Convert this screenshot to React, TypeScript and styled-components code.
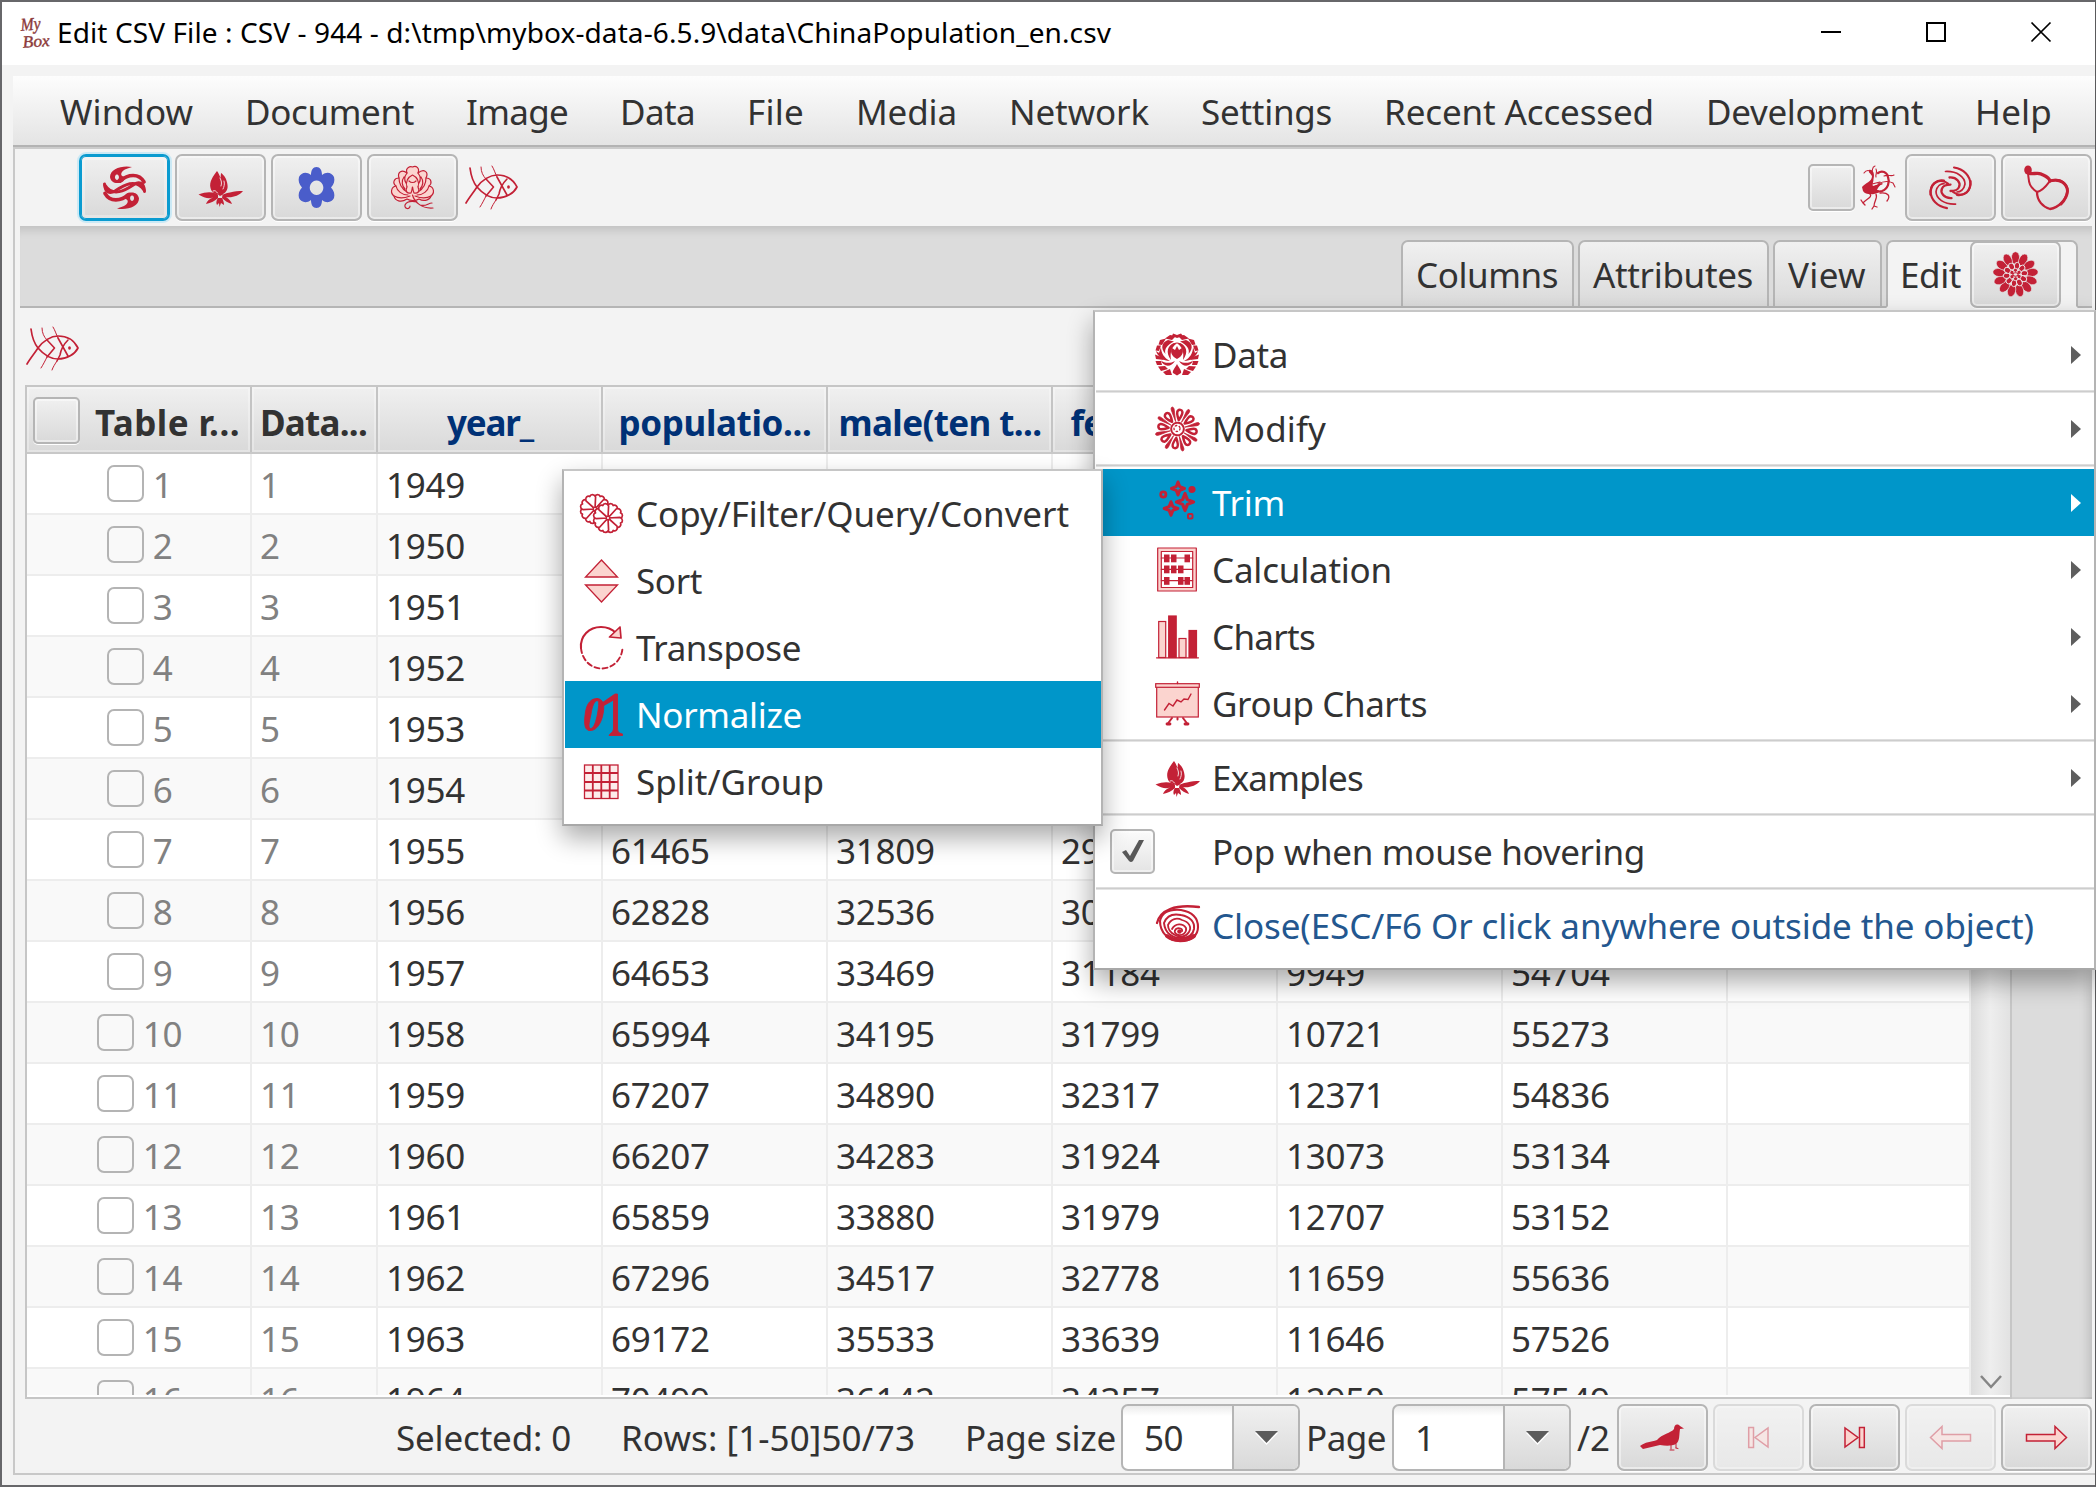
import React, { useLayoutEffect, useRef, useState } from 'react';
import styled, { createGlobalStyle, css } from 'styled-components';

const RED = '#c32136';
const PINK = '#fbd4cf';
const ACCENT = '#0096c9';

const GlobalStyle = createGlobalStyle`
  *, *::before, *::after { box-sizing: border-box; }
  html, body { margin: 0; padding: 0; overflow: hidden; }
  body {
    font-family: 'Noto Sans', 'Open Sans', 'Liberation Sans', sans-serif;
    font-size: 35px;
    line-height: 48px;
    color: #323232;
  }
`;

/* ---------- text that is tracked to an exact advance width ---------- */

const FittedSpan = styled.span<{ $w: number }>`
  display: block;
  flex: none;
  width: ${(p) => p.$w}px;
  padding-left: 1px;
  white-space: pre;
`;
const FittedInner = styled.span`
  display: inline-block;
`;

function Label({ text, w }: { text: string; w: number }) {
  const ref = useRef<HTMLSpanElement>(null);
  const [tracking, setTracking] = useState(0);
  useLayoutEffect(() => {
    const el = ref.current;
    if (!el) return;
    el.style.letterSpacing = '0px';
    const natural = el.getBoundingClientRect().width;
    const next = (w - 2 - natural) / text.length;
    el.style.letterSpacing = `${next}px`;
    setTracking(next);
  }, [text, w]);
  return (
    <FittedSpan $w={w}>
      <FittedInner ref={ref} style={{ letterSpacing: `${tracking}px` }}>{text}</FittedInner>
    </FittedSpan>
  );
}

/* ---------- icons ---------- */

const Svg = styled.svg`
  display: block;
  flex: none;
  overflow: visible;
`;

function Icon({ w = 45, h = 45, children }: { w?: number; h?: number; children: React.ReactNode }) {
  return (
    <Svg width={w} height={h} viewBox={`0 0 ${w} ${h}`} fill="none" stroke={RED} strokeWidth={1.6} strokeLinecap="round" strokeLinejoin="round">
      {children}
    </Svg>
  );
}

const ring = (n: number, offset = 0) => Array.from({ length: n }, (_, i) => offset + (360 / n) * i);

const DragonHalf = () => (
  <g>
    <path fill={RED} stroke="none" fillRule="evenodd" d="M30 2C20 0 8 4 8 12C9 18 15 19.500 21 16.500L25 12C20 12 18 10 20 7C22 4 26 3.500 30 2ZM15 9.500a2 2.700 0 1 1 -.1 0Z" />
    <path d="M18 16C26 9 37 8 42 17" strokeWidth={3.700} />
    <path d="M2.500 19C3 28 8 29 13 26C22 20 34 13 42 25" strokeWidth={3} />
  </g>
);
const TaijiIcon = () => (
  <Icon>
    <DragonHalf />
    <g transform="rotate(180 22.5 22.7)"><DragonHalf /></g>
  </Icon>
);

const LotusIcon = () => (
  <Icon>
    <g fill={RED} stroke="none">
      <path d="M19 6C15 11 11 17 12.500 23C13 26 15 28 18 29L25 29C29 27 30 23 29.500 20C29 14 26 10 23 8L22.500 13C21.500 10 20.500 8 19 6Z" />
      <path d="M20 27H25L24 33H20ZM22 31C17 27 10 26 0.500 29.500C6 33 11 34 15 32.500C11 34 9 36 8 39C13 38 17 36 20 33C18 36 18 38 19 40L21 38L21.500 42L23 38L26 40C26 37 25 35 24 33C27 36 30 38 34 39C33 36 31 34 28 32C34 33 41 31 45 26C36 26 27 28 22 31Z" />
    </g>
    <path d="M22 13C23.500 16 24 18 23 21M26 16C27 19 26 22 25 24M15 26C17 25 18 26 19.500 28" stroke="#f3d9dc" strokeWidth={1} />
  </Icon>
);

const GearFlowerIcon = () => (
  <Icon>
    <g fill="#4a5dca" stroke="none">
      <path fillRule="evenodd" d="M22.500 2C26 2 28 5 28 10C33 6 38 8 40 12C41 16 40 19 37 22.500C40 26 41 29 40 33C38 37 33 39 28 35C28 40 26 43 22.500 43C19 43 17 40 17 35C12 39 7 37 5 33C4 29 5 26 8 22.500C5 19 4 16 5 12C7 8 12 6 17 10C17 5 19 2 22.500 2ZM22.500 15.500a6.800 7.200 0 1 0 .1 0Z" />
    </g>
  </Icon>
);

const PeonyIcon = () => (
  <Icon>
    <g fill={PINK} strokeWidth={1.2}>
      <path d="M17 8C15 3 20 1 22.500 2C26 0 30 3 28 8C34 3 39 7 36 13C42 13 42 19 39 21C44 22 45 28 41 31C40 35 34 37 29 34C26 36 20 36 17 34C11 38 5 36 4 31C0 28 1 22 6 21C2 18 4 13 9 13C7 7 12 4 17 8Z" />
      <path d="M22.500 10C18 12 15 17 17 22C19 25 26 25 28 22C30 17 27 12 22.500 10Z" />
      <path d="M9 13C9 19 12 24 17 27M36 13C36 19 33 24 28 27M6 21C7 26 12 30 18 30M39 21C38 26 33 30 27 30M17 8C14 12 14 15 16 18M28 8C31 12 31 15 29 18M4 31C9 34 15 33 20 31M41 31C36 34 30 33 25 31M14 12C11 16 12 21 15 24M31 12C34 16 33 21 30 24" />
      <path d="M17 22C15 26 17 29 21 28C22 26 22 24 22.500 22C23 24 23 26 24 28C28 29 30 26 28 22M19 16C21 18 24 18 26 16" />
      <path fill="none" d="M22.500 30C24 36 31 44 43 43M27 37C22 36 17 36 15 40C14 44 20 45 20 41M30 40C36 42 38 38 42 38" />
    </g>
  </Icon>
);

const FishIcon = () => (
  <Icon w={53} h={45}>
    <path d="M5 3C6 11 8 17 12 22C18 29 24 33 32 33C41 33 49 28 52 22C48 14 41 10 32 10C25 10 17 15 12 22C8 28 4 33 1 38" strokeWidth={1.7} />
    <path d="M21 14L28.500 22L21 31M42 14C38 18 35 23 34 29L31 35M32 12L42 30" strokeWidth={1.6} />
    <path d="M16 2C16 7 18 11 21 14M27 1C29 4 30 8 32 12M21 31C19 35 17 39 15 42M31 35C29 38 27 41 26 44" strokeWidth={1} />
    <ellipse cx={43.500} cy={22} rx={1.400} ry={1.800} fill={RED} stroke="none" />
  </Icon>
);

const PhoenixIcon = () => (
  <Icon w={37} h={45}>
    <path fill={RED} stroke="none" d="M2 22C5 18 12 17 12 11C10 8 8 7 9 5C13 4 15 9 13.500 14C13.500 18 11 21 14 21C17 20 20 18 23 18C20 20 18 22 17 25C20 25 20 27 17 28C13 30 5 30 3 26Z" />
    <path d="M4 8C6 5 9 5 12 7M12 7C13 3 12 2 15 1M16 4C18 8 15 9 16 12M24 11C28 9 31 12 34 10M18 19C25 15 31 17 33 18L35 22M12 19L20 17M12 22L22 19" strokeWidth={1.1} />
    <path d="M18 8C22 5 27 7 28 12C30 17 28 24 22 26L16 27" strokeWidth={2.200} />
    <path d="M20 28C28 27 31 31 27 36M16 29C18 33 14 36 14 41L12 44M14 41L17 42M10 29C13 32 6 34 3 38L1 35M3 38L5 40" strokeWidth={1.3} />
  </Icon>
);

const WaveHalf = () => (
  <g>
    <path d="M26 2.500C36 4 42 11 42.500 19C42 28 33 33 25 27" strokeWidth={2.100} />
    <path d="M42.500 16C43 27 36 31 29 30" strokeWidth={2.200} />
    <path d="M17.500 6.500C29 6 37 12 37 19C36 25 32 27 29 27" strokeWidth={1.700} />
    <path d="M21.500 12.500C29 12 33 18 31 22C30 25 27 26 22.500 26" strokeWidth={2.300} />
  </g>
);
const WaveIcon = () => (
  <Icon>
    <WaveHalf />
    <g transform="rotate(180 22.5 22.8)"><WaveHalf /></g>
  </Icon>
);

const GourdIcon = () => (
  <Icon>
    <ellipse cx={4} cy={5} rx={3.800} ry={4.500} fill={RED} stroke="none" />
    <path d="M5 8C8 10 13 7 17 9C21 11 25 12 26 16" strokeWidth={3.400} />
    <path d="M4 8C5 16 4 21 13 27C19 26 23 20 26 16" strokeWidth={2} />
    <path d="M26 16C34 13 41 16 43.500 24C44 34 34 43 26 44C19 42 13 36 13 27" strokeWidth={2.300} />
    <path d="M28 15.500C36 14 43 18 43.500 26C43 32 40 36 37 39" strokeWidth={3} />
  </Icon>
);

const DahliaIcon = () => (
  <Icon>
    <g fill={RED} stroke="none">
      {ring(13).map((a) => <ellipse key={`o${a}`} cx={22.500} cy={6} rx={4.100} ry={6.300} transform={`rotate(${a} 22.5 22.5)`} stroke="#e8e8e8" strokeWidth={0.600} />)}
      {ring(10, 10).map((a) => <ellipse key={`m${a}`} cx={22.500} cy={13.600} rx={2.700} ry={3.400} transform={`rotate(${a} 22.5 22.5)`} stroke="#ececec" strokeWidth={0.900} />)}
      {ring(6).map((a) => <ellipse key={`i${a}`} cx={22.500} cy={18.300} rx={2.200} ry={2} transform={`rotate(${a} 22.5 22.5)`} stroke="#ececec" strokeWidth={0.800} />)}
    </g>
    <ellipse cx={22.500} cy={22.500} rx={2.600} ry={1.700} fill="#ececec" strokeWidth={1.100} />
  </Icon>
);

const BlossomSide = () => (
  <g fill={RED} stroke="none">
    <path d="M19 10C13 12 10 19 16 27C15 20 16 15 21 11Z" />
    <path d="M13 7L19 8.500C12 12 9 16 10.500 21C5 15 7 9 13 7Z" />
    <path d="M6 14C6 20 9 25 15 28C8 28 3 24 1 18L4 20Z" />
    <path d="M20 28C15 31 9 30 6 27.500C8 33.500 16 35 20 28Z" />
    <path d="M15 2L21 3L17 7L10 5.500ZM5 7L11 5.500L7 12L3.500 11.500ZM2 12.500L6 12.500L4 18L0.500 17.500ZM0 21.500L6 24L9 27L1 26ZM0.500 28L6 28L7 32L2 32ZM3 33.500L10 33L13 36L6 38ZM8 39L15 36L17 42L11 42Z" />
  </g>
);
const BlossomIcon = () => (
  <Icon>
    <g transform="translate(0 1)">
      <BlossomSide />
      <g transform="translate(44 0) scale(-1 1)"><BlossomSide /></g>
      <g fill={RED} stroke="none">
        <path d="M18 0.500L22 2L26 0.500L28 3L22 5L17 3Z" />
        <path d="M22 26C16 23 15 18 17 15L20 17L22 13L24 17L27 15C29 18 28 23 22 26Z" />
        <path d="M22 31C20 35 17 38 18 40L22 42.500L26 40C27 38 24 35 22 31Z" />
        <path d="M17 12C19 8.500 25 8.500 27 12L22 10.500Z" />
      </g>
    </g>
  </Icon>
);

const DaisyIcon = () => (
  <Icon>
    {ring(16, 8).map((a, i) => (
      <g key={a} transform={`rotate(${a} 22.5 23)`}>
        {i % 2 ? (
          <path d="M22.500 15L21.200 3C21.200 -0.500 24.400 -0.500 24.200 3Z" fill={RED} strokeWidth={0.700} />
        ) : (
          <path d="M22.500 14C20.500 10 19 7 20.200 5C21.500 3.200 24 3.200 24.800 5C26 7 24.500 10 22.500 14Z" fill="#fff" strokeWidth={2.500} />
        )}
      </g>
    ))}
    <circle cx={22.500} cy={23} r={6.300} fill="#fff" strokeWidth={2} strokeDasharray="3 1.200" />
    <circle cx={22} cy={22.500} r={3} strokeWidth={1.300} strokeDasharray="1.500 2.500" />
  </Icon>
);

const star = (cx: number, cy: number, r: number) => {
  const k = r * 0.28;
  return `M${cx} ${cy - r}L${cx + k} ${cy - k}L${cx + r} ${cy}L${cx + k} ${cy + k}L${cx} ${cy + r}L${cx - k} ${cy + k}L${cx - r} ${cy}L${cx - k} ${cy - k}Z`;
};
const SparkleIcon = () => (
  <Icon>
    <g strokeLinejoin="round">
      <path d={star(23, 8.500, 6.500)} strokeWidth={3} />
      <path d={star(30, 22, 8.500)} strokeWidth={3.200} />
      <path d={star(16, 28.500, 6.800)} strokeWidth={3} />
    </g>
    <circle cx={8.300} cy={14.500} r={2.600} strokeWidth={2.800} />
    <circle cx={37} cy={9.500} r={2.400} strokeWidth={2.400} fill={RED} />
    <rect x={33} y={34} width={4.500} height={4.500} rx={1} strokeWidth={2} />
  </Icon>
);

const AbacusIcon = () => (
  <Icon>
    <path fillRule="evenodd" fill={PINK} strokeWidth={1.200} d="M2.700 1H41.300V44H2.700ZM6.300 4.500V40.500H37.700V4.500Z" />
    <path d="M6.300 11H37.700M6.300 22.300H37.700M6.300 33.600H37.700" strokeWidth={1.200} />
    <g fill={RED} stroke="none">
      {[[9, 7.500], [16, 7.500], [29.500, 7.500], [9, 18.500], [16, 18.500], [23, 18.500], [9, 30], [23, 30], [29.500, 30]].map(([x, y]) => (
        <rect key={`${x}-${y}`} x={x} y={y} width={5.500} height={7.800} />
      ))}
    </g>
  </Icon>
);

const BarsIcon = () => (
  <Icon>
    <g strokeLinejoin="miter" strokeWidth={1.200}>
      <rect x={3.700} y={7.500} width={7} height={36} fill={PINK} />
      <rect x={13.700} y={2} width={7.500} height={41.500} fill={RED} />
      <rect x={24} y={24.500} width={7} height={19} fill={PINK} />
      <rect x={34} y={16.500} width={7.500} height={27} fill={RED} />
      <path d="M1.500 43.800H43.500" />
    </g>
  </Icon>
);

const BoardIcon = () => (
  <Icon>
    <g strokeLinejoin="miter" strokeWidth={1.200}>
      <rect x={1.700} y={5} width={41.600} height={31} fill={PINK} />
      <rect x={0.700} y={2.700} width={43.600} height={3.600} fill={PINK} />
      <path d="M22.500 1V2.500M9.500 29L14 22.500L18 25L22 19L26 21L29 18L33 18.500L36 13" strokeWidth={1.400} />
      <path d="M17 37L12.500 43M28 37L32.500 43M22.500 37V38.500" strokeWidth={2} />
      <path d="M12 43H15M30 43H33" strokeWidth={2.800} />
    </g>
  </Icon>
);

const ShellIcon = () => (
  <Icon>
    <path d="M2 20C5 7 20 1 44 4" strokeWidth={2.300} />
    <path d="M5 18C7 9 15 6 26 7C37 9 43 15 43 24C43 33 36 38 25 38C13 38 5 29 5 18Z" strokeWidth={2.100} />
    <path d="M9 20C12 12 19 10.500 26 12C35 13.500 40 19 39 26C38 32 33 35 26 35C17 35 10 30 9 20Z" strokeWidth={2} />
    <path d="M13 22C16 15.500 22 14.500 27 17C34 19 37 24 34 29C31 34 25 35 20 32C16 30 13 26 13 22Z" strokeWidth={1.800} />
    <path d="M17 26C20 20 28 20 31 25C32 29 28 33 23 32C19 30 19 28 21 26C24 24 28 26 27 28" strokeWidth={1.800} />
    <circle cx={24.500} cy={28.500} r={2.300} fill={RED} stroke="none" />
    <path d="M12 33C19 38.500 31 38.500 39 33" strokeWidth={4} />
  </Icon>
);

const Floret = ({ x, y }: { x: number; y: number }) => (
  <g transform={`translate(${x} ${y})`}>
    <circle r={13} fill="#fff" stroke="none" />
    {ring(8, 22.500).map((a) => (
      <path key={a} transform={`rotate(${a})`} d="M0 0L-5.200 -11C-5 -14.500 -1.500 -15.500 0 -13.500C1.500 -15.500 5 -14.500 5.200 -11Z" fill="#fff" strokeWidth={1.700} />
    ))}
    <circle r={1.700} fill="#fff" strokeWidth={1.300} />
  </g>
);
const FloretsIcon = () => (
  <Icon>
    <Floret x={16} y={18} />
    <Floret x={29} y={27} />
  </Icon>
);

const SortIcon = () => (
  <Icon>
    <path d="M22.500 2L38.500 19H6.500ZM22.500 44L38.500 27H6.500Z" fill={PINK} strokeWidth={1.300} strokeLinejoin="miter" />
  </Icon>
);

const RotateIcon = () => (
  <Icon>
    <path d="M2 23C1 11 10 2 22 2C28 2 33 4 37 8" strokeWidth={2.100} />
    <path d="M2 23C3 35 12 43.500 22.500 43.500C34 43.500 43.500 34 43.500 22" strokeWidth={1.900} strokeDasharray="5 3.200" />
    <path d="M41 2L42 13L30.500 12Z" fill={PINK} strokeWidth={1.700} />
  </Icon>
);

const BinaryIcon = () => (
  <Icon>
    <g fill={RED} stroke={RED} strokeWidth={0.900}>
      <path fillRule="evenodd" d="M18 6.500C24 6.500 26 13 24 22C22 33 16 39.500 10 38.500C5 37.500 5 30 6.500 20C8 11 12 6.500 18 6.500ZM18 8.500C15 9 13 15 12 22C10 31 9 36 11.500 36.500C15 36.500 17 29 18.500 22C20 13 20.500 8.500 18 8.500Z" />
      <path d="M23 11L36 2H38.500V36C38.500 40 40 41 43.500 42V43.500H30C31 41 34 41 34.500 37V8L24 14Z" />
    </g>
  </Icon>
);

const GridIcon = () => (
  <Icon>
    <g strokeLinecap="butt" strokeLinejoin="miter">
      <rect x={5.500} y={6} width={33.500} height={33.500} fill="#fdeceb" strokeWidth={1.300} />
      <path d="M13.800 6V39.500M22.300 6V39.500M30.700 6V39.500M5.500 14H39M5.500 23H39M5.500 31.500H39" strokeWidth={1.800} />
    </g>
  </Icon>
);

const PigeonIcon = () => (
  <Icon>
    <path fill={RED} stroke="none" d="M0 31C5 27 11 27 17 25C22 19 31 18 34 14C34 10 37 8 40 11L44 13.500L40 14C39 20 40 26 36 29C32 31 26 31 20 30L3 34Z" />
    <path d="M31 30V34M36 29V33M30 35H34M36 33L38 33.500" strokeWidth={1} />
  </Icon>
);

const EdgeIcon = ({ flip }: { flip?: boolean }) => (
  <Icon>
    <g transform={flip ? 'translate(45 0) scale(-1 1)' : undefined} fill={PINK} strokeWidth={1.500} strokeLinejoin="miter">
      <rect x={12.700} y={12.500} width={4.800} height={20} />
      <path d="M32 13V32L19 22.500Z" />
    </g>
  </Icon>
);
const StepIcon = ({ flip }: { flip?: boolean }) => (
  <Icon>
    <path transform={flip ? 'translate(45 0) scale(-1 1)' : undefined} fill={PINK} strokeWidth={1.500} strokeLinejoin="miter" d="M2.500 22.500L14 11.500V19.500H42.500V26H14V33.500Z" />
  </Icon>
);

/* ---------- window frame ---------- */

const Desktop = styled.div`
  position: relative;
  width: 2096px;
  height: 1487px;
  overflow: hidden;
`;
const Frame = styled.div`
  display: flex;
  flex-direction: column;
  height: 100%;
  border: 2px solid #67676a;
  border-right: 1px solid #5a5a5c;
  background: #f3f3f3;
`;
const TitleBar = styled.header`
  display: flex;
  align-items: center;
  flex: none;
  height: 63px;
  padding: 0 44px 3px 17px;
  background: #fff;
  color: #000;
  font-size: 28px;
`;
const Title = styled.div`
  flex: 1;
  padding-left: 4px;
`;
const WindowControls = styled.div`
  display: flex;
  gap: 85px;
`;

const MenuBar = styled.nav`
  display: flex;
  align-items: center;
  flex: none;
  height: 71px;
  margin: 11px 0 2px 11px;
  padding: 2px 0 0 46px;
  gap: 50px;
  background: linear-gradient(#fdfdfd, #e4e4e4);
  border-bottom: 2px solid #b3b3b3;
  box-shadow: 0 2px 0 #cbcbcb;
`;

const Pane = styled.main`
  display: flex;
  flex-direction: column;
  flex: none;
  height: 1326px;
  margin-left: 11px;
  border-left: 2px solid #c8c8c8;
  border-bottom: 2px solid #c8c8c8;
`;

const buttonFace = css`
  border: 2px solid #b5b5b5;
  background: linear-gradient(#f0f0f0, #d9d9d9);
  box-shadow: inset 0 0 0 2px rgba(255, 255, 255, 0.45), 0 1px 0 #fff;
`;

const IconButton = styled.button<{ $focused?: boolean; $disabled?: boolean }>`
  display: flex;
  align-items: center;
  justify-content: center;
  flex: none;
  width: 91px;
  height: 67px;
  padding: 0;
  border-radius: 7px;
  ${buttonFace}
  ${(p) => p.$focused && css`
    border-color: #0a9bd0;
    box-shadow: 0 0 0 2px #cbe9f5, inset 0 0 0 1px #0a9bd0, inset 0 0 0 4px rgba(255, 255, 255, 0.3);
  `}
  ${(p) => p.$disabled && css`opacity: 0.4;`}
`;

const BoxToggle = styled.span<{ $h: number }>`
  display: flex;
  align-items: center;
  justify-content: center;
  flex: none;
  width: 47px;
  height: ${(p) => p.$h}px;
  border-radius: 5px;
  ${buttonFace}
`;

const Toolbar = styled.div`
  display: flex;
  align-items: center;
  flex: none;
  height: 77px;
  padding: 0 3px 0 64px;
  gap: 5px;
`;
const ToolSpacer = styled.div`
  flex: 1;
`;
const FishSlot = styled.div`
  margin-left: 2px;
`;
const PhoenixSlot = styled.div`
  margin: 0 3px 0 0;
`;

const TabStrip = styled.div`
  display: flex;
  align-items: flex-end;
  justify-content: flex-end;
  flex: none;
  height: 82px;
  margin: 0 3px 0 5px;
  padding-right: 14px;
  gap: 4px;
  background: #dcdcdc;
  box-shadow: inset 0 12px 10px -8px rgba(0, 0, 0, 0.13), inset 0 -2px 0 #b5b5b5;
`;
const Tab = styled.div<{ $w: number; $active?: boolean }>`
  display: flex;
  align-items: center;
  width: ${(p) => p.$w}px;
  height: 68px;
  padding: 1px 0 0 12px;
  border: 2px solid #b5b5b5;
  border-radius: 7px 7px 0 0;
  background: linear-gradient(#f0f0f0, #dadada);
  ${(p) => p.$active && css`
    align-items: flex-start;
    padding: 9px 0 0 11px;
    border-bottom-color: #f3f3f3;
    background: #f3f3f3;
  `}
`;
const TabButtonSlot = styled.div`
  margin: -10px 0 0 8px;
`;

const SubToolbar = styled.div`
  flex: none;
  height: 77px;
  padding: 18px 0 0 11px;
`;

/* ---------- table ---------- */

const Split = styled.div`
  display: flex;
  flex: none;
  height: 1014px;
  margin-left: 10px;
`;
const TableBox = styled.div`
  display: flex;
  width: 1987px;
  border: 2px solid #c6c6c6;
  background: #fff;
`;
const Grid = styled.div`
  width: 1944px;
  height: 1008px;
  overflow: hidden;
`;
const SideGap = styled.div`
  width: 80px;
  background: #dcdcdc;
  box-shadow: inset -12px 0 10px -8px rgba(0, 0, 0, 0.13), inset 0 -2px 0 #cfcfcf;
`;
const COLUMN_TRACKS = '225px 126px 225px 225px 225px 225px 225px 225px 1fr';
const HeaderRow = styled.div`
  display: grid;
  grid-template-columns: ${COLUMN_TRACKS};
  height: 67px;
  border-bottom: 2px solid #c8c8c8;
`;
const HeaderCell = styled.div<{ $data?: boolean }>`
  display: flex;
  align-items: center;
  justify-content: center;
  padding: ${(p) => (p.$data ? '6px 0 0 1px' : '6px 1px 0 0')};
  border-right: 2px solid #c4c4c4;
  background: linear-gradient(#f0f0f0, #d9d9d9);
  box-shadow: inset 0 0 0 2px rgba(255, 255, 255, 0.3);
  font-weight: 700;
  color: ${(p) => (p.$data ? '#003176' : '#323232')};
`;
const SelectAllSlot = styled.div`
  margin: -4px 14px 0 -2px;
`;
const Row = styled.div<{ $alt: boolean }>`
  display: grid;
  grid-template-columns: ${COLUMN_TRACKS};
  height: 61px;
  background: ${(p) => (p.$alt ? '#f9f9f9' : '#fff')};
`;
const Cell = styled.div<{ $muted?: boolean; $center?: boolean }>`
  display: flex;
  align-items: center;
  justify-content: ${(p) => (p.$center ? 'center' : 'flex-start')};
  gap: 9px;
  padding-top: 3px;
  padding-left: ${(p) => (p.$center ? 2 : 8)}px;
  border-right: 2px solid #ededed;
  border-bottom: 2px solid #ededed;
  color: ${(p) => (p.$muted ? '#818181' : '#323232')};
  letter-spacing: -0.3px;
`;
const RowCheck = styled.span`
  width: 37px;
  height: 37px;
  margin-top: -3px;
  border: 2px solid #b4b4b4;
  border-radius: 7px;
`;
const ScrollTrack = styled.div`
  display: flex;
  align-items: flex-end;
  justify-content: center;
  width: 39px;
  height: 1008px;
  padding-bottom: 6px;
  background: linear-gradient(90deg, #dcdcdc, #eee 50%, #e2e2e2);
`;

type Record = [number, string, string, string, string, string];
const RECORDS: Record[] = [
  [1949, '', '', '', '', ''],
  [1950, '', '', '', '', ''],
  [1951, '', '', '', '', ''],
  [1952, '', '', '', '', ''],
  [1953, '', '', '', '', ''],
  [1954, '', '', '', '', ''],
  [1955, '61465', '31809', '29656', '', ''],
  [1956, '62828', '32536', '30292', '', ''],
  [1957, '64653', '33469', '31184', '9949', '54704'],
  [1958, '65994', '34195', '31799', '10721', '55273'],
  [1959, '67207', '34890', '32317', '12371', '54836'],
  [1960, '66207', '34283', '31924', '13073', '53134'],
  [1961, '65859', '33880', '31979', '12707', '53152'],
  [1962, '67296', '34517', '32778', '11659', '55636'],
  [1963, '69172', '35533', '33639', '11646', '57526'],
  [1964, '70499', '36142', '34357', '12950', '57549'],
];

function DataTable() {
  return (
    <Grid>
      <HeaderRow>
        <HeaderCell><SelectAllSlot><BoxToggle $h={47} /></SelectAllSlot><Label text="Table r..." w={147} /></HeaderCell>
        <HeaderCell><Label text="Data..." w={109} /></HeaderCell>
        <HeaderCell $data><Label text="year_" w={88} /></HeaderCell>
        <HeaderCell $data><Label text="populatio..." w={195} /></HeaderCell>
        <HeaderCell $data><Label text="male(ten t..." w={205} /></HeaderCell>
        <HeaderCell $data><Label text="female(te..." w={191} /></HeaderCell>
        <HeaderCell $data />
        <HeaderCell $data />
        <HeaderCell $data />
      </HeaderRow>
      {RECORDS.map(([year, ...values], i) => (
        <Row key={year} $alt={i % 2 === 1}>
          <Cell $center $muted><RowCheck />{i + 1}</Cell>
          <Cell $muted>{i + 1}</Cell>
          <Cell>{year}</Cell>
          {values.map((v, k) => <Cell key={k}>{v}</Cell>)}
          <Cell />
        </Row>
      ))}
    </Grid>
  );
}

/* ---------- footer ---------- */

const Footer = styled.footer`
  display: flex;
  align-items: center;
  flex: 1;
  padding: 3px 3px 0 379px;
`;
const Gap = styled.span<{ $w: number }>`
  flex: none;
  width: ${(p) => p.$w}px;
`;
const ButtonGroup = styled.div`
  display: flex;
  gap: 5px;
  margin-left: auto;
`;
const Combo = styled.div`
  display: flex;
  flex: none;
  width: 179px;
  height: 67px;
  border: 2px solid #b5b5b5;
  border-radius: 7px;
  overflow: hidden;
  background: linear-gradient(#ececec, #fff 16%);
`;
const ComboValue = styled.div`
  display: flex;
  align-items: center;
  flex: 1;
  padding-left: 21px;
  letter-spacing: -0.4px;
`;
const ComboArrow = styled.div`
  display: flex;
  align-items: center;
  justify-content: center;
  width: 66px;
  border-left: 2px solid #b5b5b5;
  background: linear-gradient(#f0f0f0, #d9d9d9);
`;

function ComboBox({ value }: { value: string }) {
  return (
    <Combo>
      <ComboValue>{value}</ComboValue>
      <ComboArrow>
        <Svg width={23} height={14} viewBox="0 0 23 14">
          <path d="M0 2H23L11.500 14Z" fill="#fff" />
          <path d="M0 0H23L11.500 12Z" fill="#5c5c5c" />
        </Svg>
      </ComboArrow>
    </Combo>
  );
}

/* ---------- popup menus ---------- */

const Popup = styled.div<{ $x: number; $y: number; $w: number }>`
  position: absolute;
  left: ${(p) => p.$x}px;
  top: ${(p) => p.$y}px;
  width: ${(p) => p.$w}px;
  padding: 9px 0 9px 1px;
  border: 2px solid #b4b4b4;
  border-top-color: #c6c6c6;
  border-bottom-color: #a8a8a8;
  background: #fff;
  box-shadow: 0 12px 24px rgba(0, 0, 0, 0.33);
`;
const MenuItem = styled.div<{ $indent: number; $selected?: boolean; $link?: boolean }>`
  display: flex;
  align-items: center;
  height: 67px;
  padding: 0 13px 0 ${(p) => p.$indent}px;
  gap: 11px;
  background: ${(p) => (p.$selected ? ACCENT : 'transparent')};
  color: ${(p) => (p.$selected ? '#fff' : p.$link ? '#23578f' : '#323232')};
`;
const Separator = styled.div`
  height: 7px;
  padding: 2px 0;
  &::before {
    content: '';
    display: block;
    height: 3px;
    background: linear-gradient(#dedede 33%, #cdcdcd 33% 66%, #e4e4e4 66%);
  }
`;
const SubmenuArrow = styled.span<{ $light?: boolean }>`
  margin-left: auto;
  border-style: solid;
  border-width: 9px 0 9px 10px;
  border-color: transparent transparent transparent ${(p) => (p.$light ? '#fff' : '#5e5e5e')};
`;
const MenuCheck = styled.span`
  display: flex;
  align-items: center;
  justify-content: center;
  flex: none;
  width: 45px;
  height: 45px;
  margin-right: 45px;
  border-radius: 5px;
  ${buttonFace}
  background: linear-gradient(#fbfbfb, #e4e4e4);
`;

type Entry = { icon: React.ReactNode; text: string; w: number; selected?: boolean; breakAfter?: boolean };
const EDIT_MENU: Entry[] = [
  { icon: <BlossomIcon />, text: 'Data', w: 78, breakAfter: true },
  { icon: <DaisyIcon />, text: 'Modify', w: 116, breakAfter: true },
  { icon: <SparkleIcon />, text: 'Trim', w: 75, selected: true },
  { icon: <AbacusIcon />, text: 'Calculation', w: 182 },
  { icon: <BarsIcon />, text: 'Charts', w: 105 },
  { icon: <BoardIcon />, text: 'Group Charts', w: 217, breakAfter: true },
  { icon: <LotusIcon />, text: 'Examples', w: 153, breakAfter: true },
];
const TRIM_MENU: Entry[] = [
  { icon: <FloretsIcon />, text: 'Copy/Filter/Query/Convert', w: 435 },
  { icon: <SortIcon />, text: 'Sort', w: 68 },
  { icon: <RotateIcon />, text: 'Transpose', w: 167 },
  { icon: <BinaryIcon />, text: 'Normalize', w: 168, selected: true },
  { icon: <GridIcon />, text: 'Split/Group', w: 190 },
];

function EditMenu() {
  return (
    <Popup $x={1093} $y={310} $w={1003}>
      {EDIT_MENU.map((e) => (
        <React.Fragment key={e.text}>
          <MenuItem $indent={59} $selected={e.selected}>
            {e.icon}
            <Label text={e.text} w={e.w} />
            <SubmenuArrow $light={e.selected} />
          </MenuItem>
          {e.breakAfter && <Separator />}
        </React.Fragment>
      ))}
      <MenuItem $indent={14}>
        <MenuCheck>
          <Svg width={22} height={23} viewBox="0 0 22 23">
            <path d="M0 12L4 10L8 16L17 0H22L11 21Q9 23 7 21Z" fill="#585858" />
          </Svg>
        </MenuCheck>
        <Label text="Pop when mouse hovering" w={435} />
      </MenuItem>
      <Separator />
      <MenuItem $indent={59} $link>
        <ShellIcon />
        <Label text="Close(ESC/F6 Or click anywhere outside the object)" w={824} />
      </MenuItem>
    </Popup>
  );
}

function TrimMenu() {
  return (
    <Popup $x={562} $y={469} $w={541}>
      {TRIM_MENU.map((e) => (
        <MenuItem key={e.text} $indent={14} $selected={e.selected}>
          {e.icon}
          <Label text={e.text} w={e.w} />
        </MenuItem>
      ))}
    </Popup>
  );
}

const MENUS: [string, number][] = [
  ['Window', 135], ['Document', 171], ['Image', 104], ['Data', 77], ['File', 59], ['Media', 103],
  ['Network', 142], ['Settings', 133], ['Recent Accessed', 272], ['Development', 219], ['Help', 79],
];

export default function App() {
  return (
    <Desktop>
      <GlobalStyle />
      <Frame>
        <TitleBar>
          <Svg width={33} height={34} viewBox="0 0 33 34" fill="#8c3a3a" stroke="#8c3a3a" strokeWidth={0.4} fontFamily="'Liberation Serif', serif" fontStyle="italic">
            <text x={2} y={15} fontSize={18} textLength={20} lengthAdjust="spacingAndGlyphs" transform="rotate(-4 12 15)">My</text>
            <text x={4} y={32} fontSize={17} textLength={27} lengthAdjust="spacingAndGlyphs" transform="rotate(-4 16 31)">Box</text>
          </Svg>
          <Title><Label text={'Edit CSV File : CSV - 944 - d:\\tmp\\mybox-data-6.5.9\\data\\ChinaPopulation_en.csv'} w={1056} /></Title>
          <WindowControls>
            <Svg width={20} height={20}><path d="M0 10H20" stroke="#000" strokeWidth={2} /></Svg>
            <Svg width={20} height={20}><rect x={1} y={1} width={18} height={18} fill="none" stroke="#000" strokeWidth={2} /></Svg>
            <Svg width={20} height={20}><path d="M0.500 0.500L19.500 19.500M19.500 0.500L0.500 19.500" stroke="#000" strokeWidth={1.700} /></Svg>
          </WindowControls>
        </TitleBar>
        <MenuBar>
          {MENUS.map(([text, w]) => <Label key={text} text={text} w={w} />)}
        </MenuBar>
        <Pane>
          <Toolbar>
            <IconButton $focused><TaijiIcon /></IconButton>
            <IconButton><LotusIcon /></IconButton>
            <IconButton><GearFlowerIcon /></IconButton>
            <IconButton><PeonyIcon /></IconButton>
            <FishSlot><FishIcon /></FishSlot>
            <ToolSpacer />
            <BoxToggle $h={47} />
            <PhoenixSlot><PhoenixIcon /></PhoenixSlot>
            <IconButton><WaveIcon /></IconButton>
            <IconButton><GourdIcon /></IconButton>
          </Toolbar>
          <TabStrip>
            <Tab $w={173}><Label text="Columns" w={144} /></Tab>
            <Tab $w={191}><Label text="Attributes" w={162} /></Tab>
            <Tab $w={109}><Label text="View" w={80} /></Tab>
            <Tab $w={192} $active>
              <Label text="Edit" w={63} />
              <TabButtonSlot><IconButton><DahliaIcon /></IconButton></TabButtonSlot>
            </Tab>
          </TabStrip>
          <SubToolbar><FishIcon /></SubToolbar>
          <Split>
            <TableBox>
              <DataTable />
              <ScrollTrack>
                <Svg width={22} height={13}><path d="M1 0L11 11L21 0" fill="none" stroke="#858585" strokeWidth={2.500} /></Svg>
              </ScrollTrack>
            </TableBox>
            <SideGap />
          </Split>
          <Footer>
            <Gap $w={1} />
            <Label text="Selected: 0" w={177} />
            <Gap $w={48} />
            <Label text="Rows: [1-50]50/73" w={296} />
            <Gap $w={48} />
            <Label text="Page size" w={153} />
            <Gap $w={4} />
            <ComboBox value="50" />
            <Gap $w={5} />
            <Label text="Page" w={82} />
            <Gap $w={5} />
            <ComboBox value="1" />
            <Gap $w={5} />
            <Label text="/2" w={35} />
            <ButtonGroup>
              <IconButton><PigeonIcon /></IconButton>
              <IconButton $disabled><EdgeIcon /></IconButton>
              <IconButton><EdgeIcon flip /></IconButton>
              <IconButton $disabled><StepIcon /></IconButton>
              <IconButton><StepIcon flip /></IconButton>
            </ButtonGroup>
          </Footer>
        </Pane>
      </Frame>
      <EditMenu />
      <TrimMenu />
    </Desktop>
  );
}
